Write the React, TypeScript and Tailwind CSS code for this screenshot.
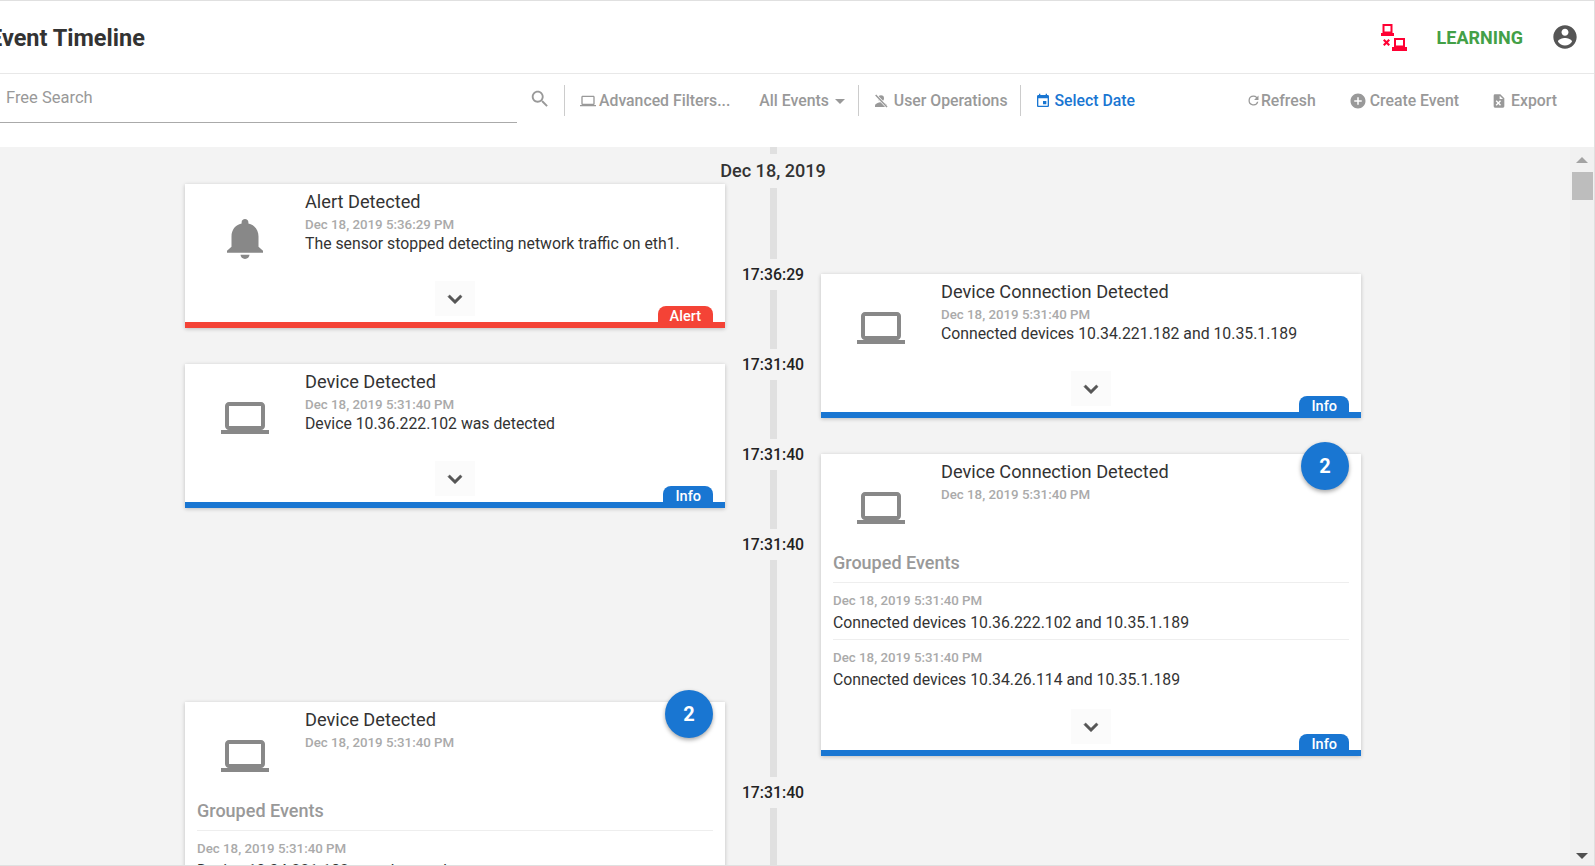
import type { ReactNode } from "react";

const rootFont = { fontFamily: "Roboto, sans-serif" };

function Laptop({ className }: { className: string }) {
  return (
    <svg viewBox="0 0 24 24" fill="currentColor" className={className}>
      <path d="M20 18c1.1 0 1.99-.9 1.99-2L22 6c0-1.1-.9-2-2-2H4c-1.1 0-2 .9-2 2v10c0 1.1.9 2 2 2H0v2h24v-2h-4zM4 6h16v10H4V6z" />
    </svg>
  );
}

function Bell() {
  return (
    <svg viewBox="0 0 24 24" fill="currentColor" preserveAspectRatio="none" className="w-[54px] h-[49px] text-[#888]">
      <path d="M12 22c1.1 0 2-.9 2-2h-4c0 1.1.89 2 2 2zm6-6v-5c0-3.07-1.64-5.64-4.5-6.32V4c0-.83-.67-1.5-1.5-1.5s-1.5.67-1.5 1.5v.68C7.63 5.36 6 7.92 6 11v5l-2 2v1h16v-1l-2-2z" />
    </svg>
  );
}

function Chevron() {
  return (
    <div className="w-10 h-[35px] bg-[#fbfbfb] flex items-center justify-center">
      <svg viewBox="0 0 24 24" fill="#555" className="w-7 h-7">
        <path d="M16.59 8.59 12 13.17 7.41 8.59 6 10l6 6 6-6z" stroke="#555" strokeWidth="0.6" />
      </svg>
    </div>
  );
}

function ToolButton({ icon, label, className }: { icon: ReactNode; label: string; className: string }) {
  return (
    <div className={`flex items-center mt-[-2px] text-[15.8px] font-medium text-[#999] ${className}`}>
      {icon}
      <span>{label}</span>
    </div>
  );
}

function Separator() {
  return <div className="w-px h-[31px] bg-[#ccc] mt-[-3px]" />;
}

function Header() {
  return (
    <header className="h-[73px] shrink-0 border-b border-[#e8e8e8] flex items-center overflow-hidden">
      <h1 className="ml-[-11px] text-[23.5px] font-bold text-[#333] whitespace-nowrap mt-[4px]">Event Timeline</h1>
      <div className="ml-auto flex items-center">
        {/* Sensor disconnected */}
        <svg viewBox="0 0 26 27" className="w-[26px] h-[27px]" fill="#ff0033">
          <path d="M2.5 1h8v7.5h-8z" fill="none" stroke="#ff0033" strokeWidth="2" />
          <path d="M0 9h13v3H0z" />
          <path d="M14 15h9v7.5h-9z" fill="none" stroke="#ff0033" strokeWidth="2" />
          <path d="M11 23h15v4H11z" />
          <path d="M2 16.5 3.5 15 5.5 17 7.5 15 9 16.5 7 18.5 9 20.5 7.5 22 5.5 20 3.5 22 2 20.5 4 18.5z" />
        </svg>
        <span className="ml-[30px] text-[18px] font-bold text-[#43a047]">LEARNING</span>
        <svg viewBox="0 0 24 24" fill="#555" className="ml-[28px] mr-[15px] w-[28px] h-[28px]">
          <path d="M12 2C6.48 2 2 6.48 2 12s4.48 10 10 10 10-4.48 10-10S17.52 2 12 2zm0 3c1.66 0 3 1.34 3 3s-1.34 3-3 3-3-1.34-3-3 1.34-3 3-3zm0 14.2c-2.5 0-4.71-1.28-6-3.22.03-1.99 4-3.08 6-3.08 1.99 0 5.97 1.09 6 3.08-1.29 1.94-3.5 3.22-6 3.22z" />
        </svg>
      </div>
    </header>
  );
}

function Toolbar() {
  return (
    <div className="h-[73px] shrink-0 flex items-center">
      <div className="w-[517px] h-[48px] mt-[-24px] border-b border-[#aaa] flex items-center pl-[6px] text-[16.5px] text-[#999] shrink-0">
        <span>Free Search</span>
      </div>
      <svg viewBox="0 0 24 24" fill="#999" className="ml-[12px] mt-[-23px] w-[22px] h-[22px] shrink-0">
        <path d="M15.5 14h-.79l-.28-.27C15.41 12.59 16 11.11 16 9.5 16 5.91 13.09 3 9.5 3S3 5.91 3 9.5 5.91 16 9.5 16c1.61 0 3.09-.59 4.23-1.57l.27.28v.79l5 4.99L20.49 19l-4.99-5zm-6 0C7.01 14 5 11.99 5 9.5S7.01 5 9.5 5 14 7.01 14 9.5 11.99 14 9.5 14z" />
      </svg>
      <div className="ml-[13px] mt-[-18px] flex items-center">
        <Separator />
        <ToolButton
          className="ml-[15px]"
          label="Advanced Filters..."
          icon={<Laptop className="w-4 h-4 mr-[3px] text-[#999]" />}
        />
        <ToolButton className="ml-[29px]" label="All Events" icon={null} />
        <svg viewBox="0 0 10 5" fill="#999" className="ml-[6px] w-[10px] h-[5px]">
          <path d="M0 0h10L5 5z" />
        </svg>
        <div className="ml-[13px]">
          <Separator />
        </div>
        <ToolButton
          className="ml-[14px]"
          label="User Operations"
          icon={
            <svg viewBox="0 0 24 24" fill="#999" className="w-[16px] h-[16px] mr-[5px]">
              <circle cx="12" cy="8" r="4.5" />
              <path d="M3 21v-2c0-3 5.5-5 9-5s9 2 9 5v2z" />
              <path d="M4 3l17 18" stroke="#fff" strokeWidth="4" />
              <path d="M4 3l17 18" stroke="#999" strokeWidth="2.2" />
            </svg>
          }
        />
        <div className="ml-[12px]">
          <Separator />
        </div>
        <ToolButton
          className="ml-[14px] !text-[#1976d2]"
          label="Select Date"
          icon={
            <svg viewBox="0 0 24 24" fill="#1976d2" className="w-4 h-4 mr-[4px]">
              <path d="M17 12h-5v5h5v-5zM16 1v2H8V1H6v2H5c-1.11 0-1.99.9-1.99 2L3 19c0 1.1.89 2 2 2h14c1.1 0 2-.9 2-2V5c0-1.1-.9-2-2-2h-1V1h-2zm3 18H5V8h14v11z" />
            </svg>
          }
        />
      </div>
      <div className="ml-auto mr-[37px] mt-[-18px] flex items-center">
        <ToolButton
          className=""
          label="Refresh"
          icon={
            <svg viewBox="0 0 24 24" fill="#999" className="w-[15px] h-[15px]">
              <path d="M17.65 6.35A7.96 7.96 0 0 0 12 4a8 8 0 1 0 7.73 10h-2.08A6 6 0 1 1 12 6c1.66 0 3.14.69 4.22 1.78L13 11h7V4z" />
            </svg>
          }
        />
        <ToolButton
          className="ml-[33px]"
          label="Create Event"
          icon={
            <svg viewBox="0 0 24 24" fill="#999" className="w-[18px] h-[18px] mr-[3px]">
              <path d="M12 2C6.48 2 2 6.48 2 12s4.48 10 10 10 10-4.48 10-10S17.52 2 12 2zm5 11h-4v4h-2v-4H7v-2h4V7h2v4h4v2z" />
            </svg>
          }
        />
        <ToolButton
          className="ml-[32px]"
          label="Export"
          icon={
            <svg viewBox="0 0 24 24" fill="#999" className="w-[16px] h-[16px] mr-[4px]">
              <path fillRule="evenodd" d="M6 2h8l6 6v12a2 2 0 0 1-2 2H6a2 2 0 0 1-2-2V4a2 2 0 0 1 2-2zm7 2v5h5zM8.5 11 7 12.5 9.5 15 7 17.5 8.5 19l2.5-2.5 2.5 2.5 1.5-1.5-2.5-2.5 2.5-2.5-1.5-1.5-2.5 2.5z" />
            </svg>
          }
        />
      </div>
    </div>
  );
}

type Level = "Alert" | "Info";

interface GroupedItem {
  date: string;
  text: string;
}

interface EventCardProps {
  title: string;
  date: string;
  text?: string;
  icon: ReactNode;
  level: Level;
  count?: number;
  grouped?: GroupedItem[];
  className?: string;
}

function EventCard({ title, date, text, icon, level, count, grouped, className = "" }: EventCardProps) {
  const levelColor = level === "Alert" ? "bg-[#f44336]" : "bg-[#1976d2]";

  return (
    <div className={`relative w-[540px] bg-white shadow-[0_1px_4px_rgba(0,0,0,0.22)] ${className}`}>
      {count && (
        <div className="absolute right-[12px] top-[-12px] w-12 h-12 rounded-full bg-[#1976d2] text-white text-[20px] font-bold flex items-center justify-center shadow-[0_2px_4px_rgba(0,0,0,0.35)]">
          {count}
        </div>
      )}
      <div className="flex h-[97px]">
        <div className="w-[120px] shrink-0 flex items-start justify-center pt-[30px]">{icon}</div>
        <div className="flex-1 pt-[6px]">
          <div className="text-[18.2px] leading-[24px] text-[#333]">{title}</div>
          <div className="text-[13.3px] leading-[18px] mt-[2px] font-medium text-[#aaa]">{date}</div>
          {text && <div className="text-[15.8px] leading-[20px] text-[#333]">{text}</div>}
        </div>
      </div>
      {grouped && (
        <div className="px-[12px] pb-[12px]">
          <div className="text-[18px] leading-[24px] font-medium text-[#999] pb-[7px] border-b border-[#eee]">Grouped Events</div>
          {grouped.map((g, i) => (
            <div key={i} className={`pt-[9px] h-[57px] ${i < grouped.length - 1 ? "border-b border-[#eee]" : ""}`}>
              <div className="text-[13.3px] leading-[18px] font-medium text-[#aaa]">{g.date}</div>
              <div className="text-[15.8px] leading-[20px] mt-[3px] text-[#333]">{g.text}</div>
            </div>
          ))}
        </div>
      )}
      <div className="flex justify-center">
        <Chevron />
      </div>
      <div className={`h-[6px] mt-[6px] relative ${levelColor}`}>
        <div className={`absolute right-[12px] bottom-full h-[16px] px-[12px] rounded-t-[8px] text-white text-[14.5px] leading-[21px] font-medium ${levelColor}`}>
          {level}
        </div>
      </div>
    </div>
  );
}

function LineSegment({ className }: { className: string }) {
  return <div className={`w-[7px] bg-[#e0e0e0] mx-auto shrink-0 ${className}`} />;
}

function TimeLabel({ children }: { children: string }) {
  return <div className="h-[31px] shrink-0 flex items-center justify-center text-[15.8px] font-medium text-[#222]">{children}</div>;
}

function Timeline() {
  const deviceIcon = <Laptop className="w-12 h-12 text-[#888]" />;
  const when = "Dec 18, 2019 5:31:40 PM";

  return (
    <div className="flex-1 flex min-w-0 overflow-hidden pl-[185px] items-start">
      {/* Left column */}
      <div className="w-[540px] shrink-0 pt-[37px]">
        <EventCard
          title="Alert Detected"
          date="Dec 18, 2019 5:36:29 PM"
          text="The sensor stopped detecting network traffic on eth1."
          icon={<Bell />}
          level="Alert"
        />
        <EventCard
          className="mt-[36px]"
          title="Device Detected"
          date={when}
          text="Device 10.36.222.102 was detected"
          icon={deviceIcon}
          level="Info"
        />
        <EventCard
          className="mt-[194px]"
          title="Device Detected"
          date={when}
          icon={deviceIcon}
          count={2}
          level="Info"
          grouped={[
            { date: when, text: "Device 10.34.221.182 was detected" },
            { date: when, text: "Device 10.35.1.189 was detected" },
          ]}
        />
      </div>

      {/* Center line */}
      <div className="w-[96px] shrink-0 h-[718px] flex flex-col">
        <LineSegment className="h-[7px]" />
        <div className="h-[34px] shrink-0 flex items-center justify-center text-[18.1px] font-medium text-[#333] whitespace-nowrap">Dec 18, 2019</div>
        <LineSegment className="h-[71px]" />
        <TimeLabel>17:36:29</TimeLabel>
        <LineSegment className="h-[59px]" />
        <TimeLabel>17:31:40</TimeLabel>
        <LineSegment className="h-[59px]" />
        <TimeLabel>17:31:40</TimeLabel>
        <LineSegment className="h-[59px]" />
        <TimeLabel>17:31:40</TimeLabel>
        <LineSegment className="h-[217px]" />
        <TimeLabel>17:31:40</TimeLabel>
        <LineSegment className="flex-1" />
      </div>

      {/* Right column */}
      <div className="w-[540px] shrink-0 pt-[127px]">
        <EventCard
          title="Device Connection Detected"
          date={when}
          text="Connected devices 10.34.221.182 and 10.35.1.189"
          icon={deviceIcon}
          level="Info"
        />
        <EventCard
          className="mt-[36px]"
          title="Device Connection Detected"
          date={when}
          icon={deviceIcon}
          count={2}
          level="Info"
          grouped={[
            { date: when, text: "Connected devices 10.36.222.102 and 10.35.1.189" },
            { date: when, text: "Connected devices 10.34.26.114 and 10.35.1.189" },
          ]}
        />
      </div>
    </div>
  );
}

function Scrollbar() {
  return (
    <div className="w-[24px] shrink-0 bg-[#f1f1f1] flex flex-col items-center pt-[10px] pb-[6px]">
      <div className="w-0 h-0 border-x-[6px] border-x-transparent border-b-[6px] border-b-[#a3a3a3] mr-[1px]" />
      <div className="w-[21px] h-[28px] bg-[#bdbdbd] mt-[9px]" />
      <div className="w-0 h-0 border-x-[6px] border-x-transparent border-t-[6px] border-t-[#505050] mr-[1px] mt-auto" />
    </div>
  );
}

export default function App() {
  return (
    <div style={rootFont} className="w-[1595px] h-[866px] overflow-hidden bg-white flex flex-col border-t border-r border-b border-[#e0e0e0]">
      <Header />
      <Toolbar />
      <div className="flex-1 min-h-0 flex bg-[#f3f3f3]">
        <Timeline />
        <Scrollbar />
      </div>
    </div>
  );
}
